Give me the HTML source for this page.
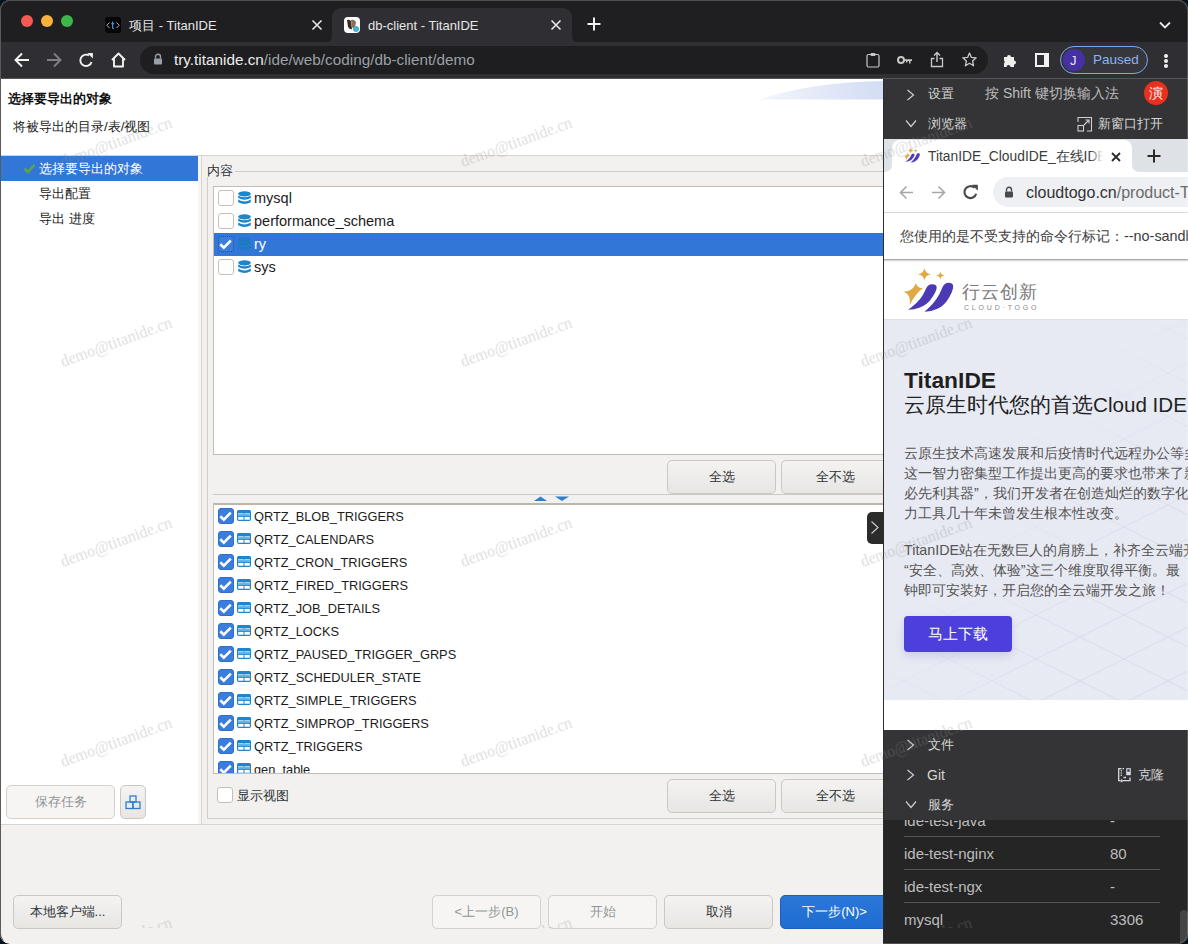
<!DOCTYPE html>
<html><head><meta charset="utf-8">
<style>
*{box-sizing:border-box;margin:0;padding:0}
html,body{width:1188px;height:944px;overflow:hidden;background:#06121c;font-family:"Liberation Sans",sans-serif}
.a{position:absolute}
.t{position:absolute;white-space:nowrap;line-height:1}
#win{position:absolute;left:0;top:0;width:1188px;height:944px;border-radius:10px;overflow:hidden;background:#f2f1f0}
/* chrome */
#tabstrip{left:0;top:0;width:1188px;height:42px;background:#1f1f21;border-top:1px solid #4e4e50}
#toolbar{left:0;top:42px;width:1188px;height:37px;background:#2f2f33;border-bottom:1px solid #555558}
.dot{position:absolute;width:12px;height:12px;border-radius:6px;top:14px}
.btn{position:absolute;border:1px solid #cdc7c2;border-radius:5px;background:linear-gradient(#f4f3f2,#e8e6e3);font-size:13px;color:#2e3436;text-align:center;line-height:32px;white-space:nowrap}
.btn.dis{background:#f6f5f4;color:#929595;border-color:#d5d0cc}
.cb{position:absolute;width:16px;height:16px;border:1px solid #c6bfb8;border-radius:3px;background:#fff}
.cbk{position:absolute;width:16px;height:16px;border-radius:3px;background:#3a7ddc;border:1px solid #2f6fcb}
.row{position:absolute;left:0;height:23px;width:700px}
.row .n{position:absolute;left:40px;top:4px;font-size:14.5px;color:#1b1b1b;white-space:nowrap;line-height:15px}
.row .n.qr{font-size:12.8px;top:4px}
.hp{font-size:14.3px;line-height:20px;color:#545454}
.j{display:inline-block;text-align:justify;text-align-last:justify;white-space:nowrap}
.wm{position:absolute;will-change:transform;font-family:"Liberation Serif",serif;font-size:16px;color:rgba(140,140,140,0.3);transform:rotate(-20deg);transform-origin:0 100%;white-space:nowrap;line-height:1;pointer-events:none}
</style></head><body>
<div id="win">
 <!-- ============ BROWSER CHROME ============ -->

 <div id="tabstrip" class="a">
  <div class="dot" style="left:21px;background:#f15b52"></div>
  <div class="dot" style="left:41px;background:#f9b23b"></div>
  <div class="dot" style="left:61px;background:#3eb548"></div>
  <!-- tab1 -->
  <div class="a" style="left:105px;top:16px;width:16px;height:16px;background:#050505;border-radius:3px"></div>
  <svg class="a" style="left:105px;top:16px" width="16" height="16"><path d="M4.5 5.5L1.8 8.3L4.5 11" stroke="#b8b8b8" stroke-width="1" fill="none"></path><path d="M11.5 5.5L14.2 8.3L11.5 11" stroke="#b8b8b8" stroke-width="1" fill="none"></path><path d="M7.6 4.5V10.5Q7.6 11.6 9 11.4M6.3 6.6H9.2" stroke="#3f95dd" stroke-width="1.2" fill="none"></path></svg>
  <div class="t" style="left:129px;top:18px;font-size:13px;color:#e6e6e6"><span class="j" style="width: 87.7px;">项目 - TitanIDE</span></div>
  <svg class="a" style="left:311px;top:18px" width="12" height="12"><path d="M1.5 1.5L10.5 10.5M10.5 1.5L1.5 10.5" stroke="#e8e8e8" stroke-width="1.6"></path></svg>
  <!-- tab2 active -->
  <div class="a" style="left:332px;top:7px;width:240px;height:36px;background:#2f2f33;border-radius:9px 9px 0 0"></div>
  <svg class="a" style="left:324px;top:34px" width="8" height="8"><path d="M0 8 Q8 8 8 0 L8 8Z" fill="#2f2f33"></path></svg>
  <svg class="a" style="left:572px;top:34px" width="8" height="8"><path d="M0 0 Q0 8 8 8 L0 8Z" fill="#2f2f33"></path></svg>
  <div class="a" style="left:344px;top:16px;width:16px;height:16px;background:#fff;border-radius:4px;overflow:hidden">
    <svg width="16" height="16"><path d="M3 3 Q5 2 7 4 L8 12 Q6 13 4 10Z" fill="#3a2a22"></path><path d="M7 3 Q10 2 12 5 L11 11 Q9 12 8 10Z" fill="#8a6e5a"></path><circle cx="12" cy="12" r="3" fill="#47b4c8"></circle></svg>
  </div>
  <div class="t" style="left:368px;top:18px;font-size:13px;color:#e6e6e6">db-client - TitanIDE</div>
  <svg class="a" style="left:550px;top:18px" width="12" height="12"><path d="M1.5 1.5L10.5 10.5M10.5 1.5L1.5 10.5" stroke="#e8e8e8" stroke-width="1.6"></path></svg>
  <svg class="a" style="left:587px;top:16px" width="14" height="14"><path d="M7 0.5V13.5M0.5 7H13.5" stroke="#f0f0f0" stroke-width="2"></path></svg>
  <svg class="a" style="left:1159px;top:20px" width="12" height="8"><path d="M1 1.5L6 6.5L11 1.5" stroke="#e8e8e8" stroke-width="1.8" fill="none"></path></svg>
 </div>
 <div id="toolbar" class="a">
  <svg class="a" style="left:14px;top:10px" width="16" height="16"><path d="M15 8H2M8 1.5L1.5 8L8 14.5" stroke="#f2f2f2" stroke-width="1.9" fill="none"></path></svg>
  <svg class="a" style="left:46px;top:10px" width="16" height="16"><path d="M1 8H14M8 1.5L14.5 8L8 14.5" stroke="#808084" stroke-width="1.9" fill="none"></path></svg>
  <svg class="a" style="left:78px;top:10px" width="16" height="16"><path d="M13.5 9.9A5.7 5.7 0 1 1 11 3.5" stroke="#f2f2f2" stroke-width="1.9" fill="none"></path><path d="M9.3 0.9L14.9 0.9L14.9 6.5Z" fill="#f2f2f2"></path></svg>
  <svg class="a" style="left:110px;top:9px" width="17" height="17"><path d="M2 9L8.5 2.5L15 9M4 7.5V15.5H13V7.5" stroke="#f2f2f2" stroke-width="1.9" fill="none" stroke-linejoin="round"></path></svg>
  <div class="a" style="left:140px;top:4px;width:848px;height:28px;border-radius:14px;background:#1e1e20"></div>
  <svg class="a" style="left:153px;top:11px" width="10" height="12"><path d="M2.5 5.5V3.8A2.5 2.5 0 0 1 7.5 3.8V5.5" stroke="#9aa0a6" stroke-width="1.4" fill="none"></path><rect x="1" y="5.5" width="8" height="6" rx="1" fill="#9aa0a6"></rect></svg>
  <div class="t" style="left:174px;top:10px;font-size:15.3px;color:#ececec">try.titanide.cn<span style="color:#9aa0a6">/ide/web/coding/db-client/demo</span></div>
  <svg class="a" style="left:866px;top:10px" width="14" height="16"><rect x="1" y="2.5" width="12" height="12.5" rx="1.5" stroke="#c8c8c8" stroke-width="1.2" fill="none"></rect><rect x="4.5" y="1" width="5" height="3" rx="1" fill="#c8c8c8"></rect></svg>
  <svg class="a" style="left:897px;top:13px" width="16" height="10"><circle cx="4" cy="5" r="3" stroke="#c8c8c8" stroke-width="2" fill="none"></circle><path d="M7 4.2H15V6H13.5V8.5H12V6H10.5V7.5H9V6H7Z" fill="#c8c8c8"></path></svg>
  <svg class="a" style="left:930px;top:9px" width="14" height="17"><path d="M7 11V2M4 4.5L7 1.5L10 4.5" stroke="#c8c8c8" stroke-width="1.4" fill="none"></path><path d="M4.5 7.5H1.5V15.5H12.5V7.5H9.5" stroke="#c8c8c8" stroke-width="1.3" fill="none"></path></svg>
  <svg class="a" style="left:962px;top:10px" width="15" height="15"><path d="M7.5 1L9.4 5.4L14.2 5.8L10.6 9L11.6 13.8L7.5 11.3L3.4 13.8L4.4 9L0.8 5.8L5.6 5.4Z" stroke="#c8c8c8" stroke-width="1.3" fill="none" stroke-linejoin="round"></path></svg>
  <svg class="a" style="left:1002px;top:10px" width="16" height="16"><path d="M2 5H5A2 2 0 0 1 9 5H12V8.5A2 2 0 0 1 12 12.5V15H8.5A2 2 0 0 0 4.5 15H2V11.5A2 2 0 0 0 2 8.5Z" fill="#eeeeee"></path></svg>
  <div class="a" style="left:1035px;top:11px;width:14px;height:14px;border:2px solid #f2f2f2;border-right-width:5px"></div>
  <div class="a" style="left:1060px;top:4px;width:88px;height:28px;border-radius:14px;border:1px solid #7ca6e6;background:#35373d"></div>
  <div class="a" style="left:1063px;top:7px;width:22px;height:22px;border-radius:11px;background:#4530a4"></div>
  <div class="t" style="left:1070px;top:12px;font-size:13px;color:#e8e4f8">J</div>
  <div class="t" style="left:1093px;top:11px;font-size:13.5px;color:#8ab4f8">Paused</div>
  <div class="a" style="left:1164px;top:12px;width:4px;height:4px;border-radius:2px;background:#f2f2f2"></div>
  <div class="a" style="left:1164px;top:17px;width:4px;height:4px;border-radius:2px;background:#f2f2f2"></div>
  <div class="a" style="left:1164px;top:22px;width:4px;height:4px;border-radius:2px;background:#f2f2f2"></div>
 </div>

 <!-- ============ DIALOG ============ -->
 <div class="a" style="left:0;top:79px;width:884px;height:76px;background:#fff"></div>
 <svg class="a" style="left:760px;top:80px" width="124" height="21"><defs><linearGradient id="arcg" x1="0" x2="1"><stop offset="0" stop-color="#f4f6fc"></stop><stop offset="1" stop-color="#d2dcf3"></stop></linearGradient></defs><path d="M0 19.5 Q50 2 124 1 L124 19.5Z" fill="url(#arcg)"></path></svg>
 <div class="t" style="left:8px;top:92px;font-size:13px;font-weight:700;color:#111"><span class="j" style="width: 104px;">选择要导出的对象</span></div>
 <div class="t" style="left:13px;top:120px;font-size:13.4px;color:#222"><span class="j" style="width: 137.5px;">将被导出的目录/表/视图</span></div>
 <div class="a" style="left:0;top:155px;width:884px;height:1px;background:#d9d4cf"></div>
 <!-- nav -->
 <div class="a" style="left:0;top:156px;width:198px;height:668px;background:#fff"></div>
 <div class="a" style="left:1px;top:156px;width:197px;height:25px;background:#3277d7"></div>
 <svg class="a" style="left:23px;top:163px" width="13" height="11"><path d="M1.5 5.5L4.8 9L11.5 1.8" stroke="#5aa34a" stroke-width="2.6" fill="none"></path></svg>
 <div class="t" style="left:39px;top:162px;font-size:13px;color:#fff"><span class="j" style="width: 104px;">选择要导出的对象</span></div>
 <div class="t" style="left:39px;top:187px;font-size:13px;color:#1b1b1b"><span class="j" style="width: 52px;">导出配置</span></div>
 <div class="t" style="left:39px;top:212px;font-size:13px;color:#1b1b1b"><span class="j" style="width: 55.6px;">导出 进度</span></div>
 <div class="a" style="left:198px;top:156px;width:3px;height:668px;background:#f6f5f4"></div>
 <div class="a" style="left:201px;top:156px;width:1px;height:668px;background:#dad5d0"></div>
 <!-- content group -->
 <div class="a" style="left:207px;top:171px;width:690px;height:648px;border:1px solid #d3cdc8"></div>
 <div class="t" style="left:207px;top:164px;font-size:13px;color:#2e3436;background:#f2f1f0;padding-right:2px"><span class="j" style="width: 26px;">内容</span></div>
 <!-- top list -->
 <div class="a" style="left:213px;top:186px;width:680px;height:269px;background:#fff;border:1px solid #c4bdb6;overflow:hidden">
  <div class="row" style="top:0"><div class="cb" style="left:4px;top:3px"></div><svg class="a" style="left:24px;top:4px" width="13" height="15"><ellipse cx="6.5" cy="2.8" rx="6.3" ry="2.6" fill="#1d86c8"></ellipse><path d="M0.2 4.5Q6.5 8.2 12.8 4.5V7Q6.5 10.6 0.2 7Z" fill="#1d86c8"></path><path d="M0.2 8.6Q6.5 12.3 12.8 8.6V11.2Q6.5 14.8 0.2 11.2Z" fill="#1d86c8"></path></svg><div class="n">mysql</div></div>
  <div class="row" style="top:23px"><div class="cb" style="left:4px;top:3px"></div><svg class="a" style="left:24px;top:4px" width="13" height="15"><ellipse cx="6.5" cy="2.8" rx="6.3" ry="2.6" fill="#1d86c8"></ellipse><path d="M0.2 4.5Q6.5 8.2 12.8 4.5V7Q6.5 10.6 0.2 7Z" fill="#1d86c8"></path><path d="M0.2 8.6Q6.5 12.3 12.8 8.6V11.2Q6.5 14.8 0.2 11.2Z" fill="#1d86c8"></path></svg><div class="n">performance_schema</div></div>
  <div class="row" style="top:46px;background:#3277d7;width:680px"><div class="cbk" style="left:4px;top:3px;border:1px dotted #1d4f95;background:#3a7fdc"></div><svg class="a" style="left:5px;top:6px" width="13" height="11"><path d="M1.3 5.2L4.8 8.6L11.8 1.6" stroke="#fff" stroke-width="2.6" fill="none"></path></svg><svg class="a" style="left:24px;top:4px" width="13" height="15"><ellipse cx="6.5" cy="2.8" rx="6.3" ry="2.6" fill="#1a7cbe"></ellipse><path d="M0.2 4.5Q6.5 8.2 12.8 4.5V7Q6.5 10.6 0.2 7Z" fill="#1a7cbe"></path><path d="M0.2 8.6Q6.5 12.3 12.8 8.6V11.2Q6.5 14.8 0.2 11.2Z" fill="#1a7cbe"></path></svg><div class="n" style="color:#fff">ry</div></div>
  <div class="row" style="top:69px"><div class="cb" style="left:4px;top:3px"></div><svg class="a" style="left:24px;top:4px" width="13" height="15"><ellipse cx="6.5" cy="2.8" rx="6.3" ry="2.6" fill="#1d86c8"></ellipse><path d="M0.2 4.5Q6.5 8.2 12.8 4.5V7Q6.5 10.6 0.2 7Z" fill="#1d86c8"></path><path d="M0.2 8.6Q6.5 12.3 12.8 8.6V11.2Q6.5 14.8 0.2 11.2Z" fill="#1d86c8"></path></svg><div class="n">sys</div></div>
 </div>
 <div class="btn" style="left:667px;top:460px;width:109px;height:34px"><span class="j" style="width: 26px;">全选</span></div>
 <div class="btn" style="left:781px;top:460px;width:109px;height:34px"><span class="j" style="width: 39px;">全不选</span></div>
 <div class="a" style="left:213px;top:494px;width:680px;height:1px;background:#cfc9c4"></div>
 <svg class="a" style="left:532px;top:496px" width="40" height="6"><path d="M2 5L8.5 0.5L15 5Z" fill="#2f7fcf"></path><path d="M23 0.5L37 0.5L30 5Z" fill="#2f7fcf"></path></svg>
 <!-- bottom list -->
 <div class="a" style="left:213px;top:503px;width:680px;height:271px;background:#fff;border:1px solid #c4bdb6;border-top:2px solid #bdb6af;overflow:hidden">
  <div class="row" style="top:0px"><div class="cbk" style="left:4px;top:3px"></div><svg class="a" style="left:5px;top:6px" width="13" height="11"><path d="M1.3 5.2L4.8 8.6L11.8 1.6" stroke="#fff" stroke-width="2.6" fill="none"></path></svg><svg class="a" style="left:23px;top:5px" width="14" height="11"><rect x="0.6" y="0.6" width="12.8" height="9.8" rx="1.2" fill="#fff" stroke="#1f86cc" stroke-width="1.2"></rect><rect x="0.6" y="0.6" width="12.8" height="2.6" fill="#1f86cc"></rect><rect x="1.2" y="3.6" width="5.2" height="2.4" fill="#62b6e8"></rect><rect x="7.6" y="3.6" width="5.2" height="2.4" fill="#62b6e8"></rect><path d="M7 3V10.5M1 6.4H13" stroke="#1f86cc" stroke-width="1"></path></svg><div class="n qr">QRTZ_BLOB_TRIGGERS</div></div>
  <div class="row" style="top:23px"><div class="cbk" style="left:4px;top:3px"></div><svg class="a" style="left:5px;top:6px" width="13" height="11"><path d="M1.3 5.2L4.8 8.6L11.8 1.6" stroke="#fff" stroke-width="2.6" fill="none"></path></svg><svg class="a" style="left:23px;top:5px" width="14" height="11"><rect x="0.6" y="0.6" width="12.8" height="9.8" rx="1.2" fill="#fff" stroke="#1f86cc" stroke-width="1.2"></rect><rect x="0.6" y="0.6" width="12.8" height="2.6" fill="#1f86cc"></rect><rect x="1.2" y="3.6" width="5.2" height="2.4" fill="#62b6e8"></rect><rect x="7.6" y="3.6" width="5.2" height="2.4" fill="#62b6e8"></rect><path d="M7 3V10.5M1 6.4H13" stroke="#1f86cc" stroke-width="1"></path></svg><div class="n qr">QRTZ_CALENDARS</div></div>
  <div class="row" style="top:46px"><div class="cbk" style="left:4px;top:3px"></div><svg class="a" style="left:5px;top:6px" width="13" height="11"><path d="M1.3 5.2L4.8 8.6L11.8 1.6" stroke="#fff" stroke-width="2.6" fill="none"></path></svg><svg class="a" style="left:23px;top:5px" width="14" height="11"><rect x="0.6" y="0.6" width="12.8" height="9.8" rx="1.2" fill="#fff" stroke="#1f86cc" stroke-width="1.2"></rect><rect x="0.6" y="0.6" width="12.8" height="2.6" fill="#1f86cc"></rect><rect x="1.2" y="3.6" width="5.2" height="2.4" fill="#62b6e8"></rect><rect x="7.6" y="3.6" width="5.2" height="2.4" fill="#62b6e8"></rect><path d="M7 3V10.5M1 6.4H13" stroke="#1f86cc" stroke-width="1"></path></svg><div class="n qr">QRTZ_CRON_TRIGGERS</div></div>
  <div class="row" style="top:69px"><div class="cbk" style="left:4px;top:3px"></div><svg class="a" style="left:5px;top:6px" width="13" height="11"><path d="M1.3 5.2L4.8 8.6L11.8 1.6" stroke="#fff" stroke-width="2.6" fill="none"></path></svg><svg class="a" style="left:23px;top:5px" width="14" height="11"><rect x="0.6" y="0.6" width="12.8" height="9.8" rx="1.2" fill="#fff" stroke="#1f86cc" stroke-width="1.2"></rect><rect x="0.6" y="0.6" width="12.8" height="2.6" fill="#1f86cc"></rect><rect x="1.2" y="3.6" width="5.2" height="2.4" fill="#62b6e8"></rect><rect x="7.6" y="3.6" width="5.2" height="2.4" fill="#62b6e8"></rect><path d="M7 3V10.5M1 6.4H13" stroke="#1f86cc" stroke-width="1"></path></svg><div class="n qr">QRTZ_FIRED_TRIGGERS</div></div>
  <div class="row" style="top:92px"><div class="cbk" style="left:4px;top:3px"></div><svg class="a" style="left:5px;top:6px" width="13" height="11"><path d="M1.3 5.2L4.8 8.6L11.8 1.6" stroke="#fff" stroke-width="2.6" fill="none"></path></svg><svg class="a" style="left:23px;top:5px" width="14" height="11"><rect x="0.6" y="0.6" width="12.8" height="9.8" rx="1.2" fill="#fff" stroke="#1f86cc" stroke-width="1.2"></rect><rect x="0.6" y="0.6" width="12.8" height="2.6" fill="#1f86cc"></rect><rect x="1.2" y="3.6" width="5.2" height="2.4" fill="#62b6e8"></rect><rect x="7.6" y="3.6" width="5.2" height="2.4" fill="#62b6e8"></rect><path d="M7 3V10.5M1 6.4H13" stroke="#1f86cc" stroke-width="1"></path></svg><div class="n qr">QRTZ_JOB_DETAILS</div></div>
  <div class="row" style="top:115px"><div class="cbk" style="left:4px;top:3px"></div><svg class="a" style="left:5px;top:6px" width="13" height="11"><path d="M1.3 5.2L4.8 8.6L11.8 1.6" stroke="#fff" stroke-width="2.6" fill="none"></path></svg><svg class="a" style="left:23px;top:5px" width="14" height="11"><rect x="0.6" y="0.6" width="12.8" height="9.8" rx="1.2" fill="#fff" stroke="#1f86cc" stroke-width="1.2"></rect><rect x="0.6" y="0.6" width="12.8" height="2.6" fill="#1f86cc"></rect><rect x="1.2" y="3.6" width="5.2" height="2.4" fill="#62b6e8"></rect><rect x="7.6" y="3.6" width="5.2" height="2.4" fill="#62b6e8"></rect><path d="M7 3V10.5M1 6.4H13" stroke="#1f86cc" stroke-width="1"></path></svg><div class="n qr">QRTZ_LOCKS</div></div>
  <div class="row" style="top:138px"><div class="cbk" style="left:4px;top:3px"></div><svg class="a" style="left:5px;top:6px" width="13" height="11"><path d="M1.3 5.2L4.8 8.6L11.8 1.6" stroke="#fff" stroke-width="2.6" fill="none"></path></svg><svg class="a" style="left:23px;top:5px" width="14" height="11"><rect x="0.6" y="0.6" width="12.8" height="9.8" rx="1.2" fill="#fff" stroke="#1f86cc" stroke-width="1.2"></rect><rect x="0.6" y="0.6" width="12.8" height="2.6" fill="#1f86cc"></rect><rect x="1.2" y="3.6" width="5.2" height="2.4" fill="#62b6e8"></rect><rect x="7.6" y="3.6" width="5.2" height="2.4" fill="#62b6e8"></rect><path d="M7 3V10.5M1 6.4H13" stroke="#1f86cc" stroke-width="1"></path></svg><div class="n qr">QRTZ_PAUSED_TRIGGER_GRPS</div></div>
  <div class="row" style="top:161px"><div class="cbk" style="left:4px;top:3px"></div><svg class="a" style="left:5px;top:6px" width="13" height="11"><path d="M1.3 5.2L4.8 8.6L11.8 1.6" stroke="#fff" stroke-width="2.6" fill="none"></path></svg><svg class="a" style="left:23px;top:5px" width="14" height="11"><rect x="0.6" y="0.6" width="12.8" height="9.8" rx="1.2" fill="#fff" stroke="#1f86cc" stroke-width="1.2"></rect><rect x="0.6" y="0.6" width="12.8" height="2.6" fill="#1f86cc"></rect><rect x="1.2" y="3.6" width="5.2" height="2.4" fill="#62b6e8"></rect><rect x="7.6" y="3.6" width="5.2" height="2.4" fill="#62b6e8"></rect><path d="M7 3V10.5M1 6.4H13" stroke="#1f86cc" stroke-width="1"></path></svg><div class="n qr">QRTZ_SCHEDULER_STATE</div></div>
  <div class="row" style="top:184px"><div class="cbk" style="left:4px;top:3px"></div><svg class="a" style="left:5px;top:6px" width="13" height="11"><path d="M1.3 5.2L4.8 8.6L11.8 1.6" stroke="#fff" stroke-width="2.6" fill="none"></path></svg><svg class="a" style="left:23px;top:5px" width="14" height="11"><rect x="0.6" y="0.6" width="12.8" height="9.8" rx="1.2" fill="#fff" stroke="#1f86cc" stroke-width="1.2"></rect><rect x="0.6" y="0.6" width="12.8" height="2.6" fill="#1f86cc"></rect><rect x="1.2" y="3.6" width="5.2" height="2.4" fill="#62b6e8"></rect><rect x="7.6" y="3.6" width="5.2" height="2.4" fill="#62b6e8"></rect><path d="M7 3V10.5M1 6.4H13" stroke="#1f86cc" stroke-width="1"></path></svg><div class="n qr">QRTZ_SIMPLE_TRIGGERS</div></div>
  <div class="row" style="top:207px"><div class="cbk" style="left:4px;top:3px"></div><svg class="a" style="left:5px;top:6px" width="13" height="11"><path d="M1.3 5.2L4.8 8.6L11.8 1.6" stroke="#fff" stroke-width="2.6" fill="none"></path></svg><svg class="a" style="left:23px;top:5px" width="14" height="11"><rect x="0.6" y="0.6" width="12.8" height="9.8" rx="1.2" fill="#fff" stroke="#1f86cc" stroke-width="1.2"></rect><rect x="0.6" y="0.6" width="12.8" height="2.6" fill="#1f86cc"></rect><rect x="1.2" y="3.6" width="5.2" height="2.4" fill="#62b6e8"></rect><rect x="7.6" y="3.6" width="5.2" height="2.4" fill="#62b6e8"></rect><path d="M7 3V10.5M1 6.4H13" stroke="#1f86cc" stroke-width="1"></path></svg><div class="n qr">QRTZ_SIMPROP_TRIGGERS</div></div>
  <div class="row" style="top:230px"><div class="cbk" style="left:4px;top:3px"></div><svg class="a" style="left:5px;top:6px" width="13" height="11"><path d="M1.3 5.2L4.8 8.6L11.8 1.6" stroke="#fff" stroke-width="2.6" fill="none"></path></svg><svg class="a" style="left:23px;top:5px" width="14" height="11"><rect x="0.6" y="0.6" width="12.8" height="9.8" rx="1.2" fill="#fff" stroke="#1f86cc" stroke-width="1.2"></rect><rect x="0.6" y="0.6" width="12.8" height="2.6" fill="#1f86cc"></rect><rect x="1.2" y="3.6" width="5.2" height="2.4" fill="#62b6e8"></rect><rect x="7.6" y="3.6" width="5.2" height="2.4" fill="#62b6e8"></rect><path d="M7 3V10.5M1 6.4H13" stroke="#1f86cc" stroke-width="1"></path></svg><div class="n qr">QRTZ_TRIGGERS</div></div>
  <div class="row" style="top:253px"><div class="cbk" style="left:4px;top:3px"></div><svg class="a" style="left:5px;top:6px" width="13" height="11"><path d="M1.3 5.2L4.8 8.6L11.8 1.6" stroke="#fff" stroke-width="2.6" fill="none"></path></svg><svg class="a" style="left:23px;top:5px" width="14" height="11"><rect x="0.6" y="0.6" width="12.8" height="9.8" rx="1.2" fill="#fff" stroke="#1f86cc" stroke-width="1.2"></rect><rect x="0.6" y="0.6" width="12.8" height="2.6" fill="#1f86cc"></rect><rect x="1.2" y="3.6" width="5.2" height="2.4" fill="#62b6e8"></rect><rect x="7.6" y="3.6" width="5.2" height="2.4" fill="#62b6e8"></rect><path d="M7 3V10.5M1 6.4H13" stroke="#1f86cc" stroke-width="1"></path></svg><div class="n qr">gen_table</div></div>
  
 </div>
 <div class="cb" style="left:217px;top:787px"></div>
 <div class="t" style="left:237px;top:789px;font-size:13px;color:#2e3436"><span class="j" style="width: 52px;">显示视图</span></div>
 <div class="btn" style="left:667px;top:779px;width:109px;height:34px"><span class="j" style="width: 26px;">全选</span></div>
 <div class="btn" style="left:781px;top:779px;width:109px;height:34px"><span class="j" style="width: 39px;">全不选</span></div>
 <div class="btn dis" style="left:6px;top:785px;width:109px;height:34px"><span class="j" style="width: 52px;">保存任务</span></div>
 <div class="btn" style="left:120px;top:785px;width:26px;height:34px"></div>
 <svg class="a" style="left:125px;top:795px" width="16" height="15"><rect x="5" y="1" width="6" height="6" stroke="#2a7fd4" stroke-width="1.3" fill="none"></rect><rect x="1" y="7" width="7" height="6.5" stroke="#2a7fd4" stroke-width="1.3" fill="none"></rect><rect x="8" y="7" width="7" height="6.5" stroke="#2a7fd4" stroke-width="1.3" fill="none"></rect></svg>
 <div class="a" style="left:0;top:824px;width:884px;height:1px;background:#d9d4cf"></div>
 <div class="btn" style="left:13px;top:895px;width:109px;height:34px"><span class="j" style="width: 75.8px;">本地客户端...</span></div>
 <div class="btn dis" style="left:432px;top:895px;width:109px;height:34px"><span class="j" style="width: 63.9px;">&lt;上一步(B)</span></div>
 <div class="btn dis" style="left:548px;top:895px;width:109px;height:34px"><span class="j" style="width: 26px;">开始</span></div>
 <div class="btn" style="left:664px;top:895px;width:109px;height:34px"><span class="j" style="width: 26px;">取消</span></div>
 <div class="btn" style="left:780px;top:895px;width:109px;height:34px;background:linear-gradient(#2b78d8,#1f6cd2);border-color:#1b5fb8;color:#fff"><span class="j" style="width: 64.6px;">下一步(N)&gt;</span></div>
 <div class="a" style="left:867px;top:512px;width:17px;height:32px;background:#2b2b2b;border-radius:5px 0 0 5px"></div>
 <svg class="a" style="left:870px;top:520px" width="10" height="15"><path d="M1.5 1.5L8 7.5L1.5 13.5" stroke="#cfcfcf" stroke-width="1.1" fill="none"></path></svg>
 <div class="a" style="left:0;top:79px;width:1px;height:863px;background:#3a3a3a"></div>

 <!-- ============ RIGHT PANEL ============ -->
 <div class="a" style="left:883px;top:79px;width:305px;height:865px;background:#252526"></div>
 <div class="a" style="left:884px;top:79px;width:304px;height:60px;background:#343436"></div>
 <svg class="a" style="left:906px;top:89px" width="10" height="12"><path d="M1.5 1L7.5 6L1.5 11" stroke="#cfcfcf" stroke-width="1.2" fill="none"></path></svg>
 <div class="t" style="left:928px;top:87px;font-size:13px;color:#d4d4d4"><span class="j" style="width: 26px;">设置</span></div>
 <div class="t" style="left:985px;top:86px;font-size:14px;color:#bdbdbd"><span class="j" style="width: 133.8px;">按 Shift 键切换输入法</span></div>
 <div class="a" style="left:1144px;top:81px;width:24px;height:24px;border-radius:12px;background:#e8301c"></div>
 <div class="t" style="left:1149px;top:86px;font-size:14px;color:#fff"><span class="j" style="width: 14px;">演</span></div>
 <svg class="a" style="left:905px;top:119px" width="12" height="10"><path d="M1 1.5L6 7.5L11 1.5" stroke="#cfcfcf" stroke-width="1.2" fill="none"></path></svg>
 <div class="t" style="left:928px;top:117px;font-size:13px;color:#d4d4d4"><span class="j" style="width: 39px;">浏览器</span></div>
 <svg class="a" style="left:1077px;top:116px" width="16" height="16"><path d="M1 6V1.5H14.5V15H10" stroke="#cfcfcf" stroke-width="1.1" fill="none"></path><rect x="1" y="9.5" width="5.5" height="5.5" stroke="#cfcfcf" stroke-width="1.1" fill="none"></rect><path d="M7 9L12 4M8.5 4H12V7.5" stroke="#cfcfcf" stroke-width="1.1" fill="none"></path></svg>
 <div class="t" style="left:1098px;top:117px;font-size:13px;color:#d4d4d4"><span class="j" style="width: 65px;">新窗口打开</span></div>
 <!-- embedded browser -->
 <div class="a" style="left:884px;top:139px;width:304px;height:591px;background:#fff;overflow:hidden">
  <div class="a" style="left:0;top:0;width:304px;height:33px;background:#dee1e6"></div>
  <div class="a" style="left:8px;top:1px;width:240px;height:33px;background:#fff;border-radius:8px 8px 0 0"></div>
  <svg class="a" style="left:0px;top:25px" width="8" height="8"><path d="M0 8 Q8 8 8 0 L8 8Z" fill="#fff"></path></svg>
  <svg class="a" style="left:248px;top:25px" width="8" height="8"><path d="M0 0 Q0 8 8 8 L0 8Z" fill="#fff"></path></svg>
  <svg class="a" style="left:20px;top:9px" width="18" height="16"><g transform="translate(-1.8,-1.5) scale(0.32)"><path d="M26.4 3Q27 11 35 12.2Q27 13.4 26.4 21Q25.8 13.4 18 12.2Q25.8 11 26.4 3Z" fill="#e1a943"></path><path d="M42.4 7Q42.8 13 49 13.4Q42.8 13.8 42.4 20Q42 13.8 36 13.4Q42 13 42.4 7Z" fill="#e1a943"></path><path d="M17.8 21Q19 26.5 25.2 26.1Q18 31 11.6 43.3Q13.5 33 5.9 29.7Q15.5 29 17.8 21Z" fill="#e1a943"></path><path d="M7 48.5C18 49.5 28 45 33 38.5C37 33 39.5 29 39.5 25.5C39.5 22.5 37 21.5 34 21.5C30.5 21.5 28.5 23.5 27 27C24.5 33 19.5 40 13 44.5C11 46 9 47.5 7 48.5Z" fill="#4a3bb5" stroke="#fff" stroke-width="2"></path><path d="M24 50.5C35 51.5 45 46 49.5 39.5C53.5 33.5 56 29 56 24.5C56 21.5 53.5 20 50.5 20C47 20 45 22 43.5 25.5C41 32 36 40 30 45.5C28 47.5 26 49.5 24 50.5Z" fill="#4a3bb5" stroke="#fff" stroke-width="2"></path></g></svg>
  <div class="a" style="left:44px;top:9px;font-size:13.8px;line-height:17px;white-space:nowrap;color:#3c3c3c;width:178px;overflow:hidden"><span class="j" style="width: 228.2px;">TitanIDE_CloudIDE_在线IDE_云原生</span></div><div class="a" style="left:206px;top:8px;width:16px;height:20px;background:linear-gradient(to right,rgba(255,255,255,0),#fff 80%)"></div>
  <svg class="a" style="left:227px;top:13px" width="10" height="10"><path d="M1 1L9 9M9 1L1 9" stroke="#2a2a2a" stroke-width="1.8"></path></svg>
  <svg class="a" style="left:263px;top:10px" width="14" height="14"><path d="M7 0.5V13.5M0.5 7H13.5" stroke="#2a2a2a" stroke-width="2"></path></svg>
  <!-- toolbar -->
  <svg class="a" style="left:15px;top:46px" width="15" height="15"><path d="M14 7.5H2M7.5 1.5L1.5 7.5L7.5 13.5" stroke="#a5a7aa" stroke-width="1.6" fill="none"></path></svg>
  <svg class="a" style="left:47px;top:46px" width="15" height="15"><path d="M1 7.5H13M7.5 1.5L13.5 7.5L7.5 13.5" stroke="#a5a7aa" stroke-width="1.6" fill="none"></path></svg>
  <svg class="a" style="left:78px;top:45px" width="17" height="17"><path d="M14.2 9.8A6 6 0 1 1 12.4 3.6" stroke="#48484b" stroke-width="2.1" fill="none"></path><path d="M9.8 0.8L15.8 0.8L15.8 6.8Z" fill="#48484b"></path></svg>
  <div class="a" style="left:109px;top:38px;width:220px;height:30px;border-radius:15px;background:#eef0f3"></div>
  <svg class="a" style="left:120px;top:47px" width="10" height="12"><path d="M2.5 5.5V3.8A2.5 2.5 0 0 1 7.5 3.8V5.5" stroke="#4a4a4d" stroke-width="1.4" fill="none"></path><rect x="1" y="5.5" width="8" height="6" rx="1" fill="#4a4a4d"></rect></svg>
  <div class="t" style="left:142px;top:46px;font-size:16px;color:#333">cloudtogo.cn<span style="color:#6a6a6a">/product-TitanIDE</span></div>
  <div class="a" style="left:0;top:73px;width:304px;height:1px;background:#d6d8dc"></div>
  <div class="t" style="left:16px;top:90px;font-size:14.4px;color:#3c3c3c"><span class="j" style="width: 308.8px;">您使用的是不受支持的命令行标记：--no-sandbox</span></div>
  <div class="a" style="left:0;top:120px;width:304px;height:1px;background:#a9a9a9"></div>
  <div class="a" style="left:0;top:121px;width:304px;height:2px;background:linear-gradient(#cfcfcf,#fff)"></div>
  <!-- page -->
  <svg class="a" style="left:14px;top:123px" width="60" height="56"><path d="M26.4 5.7Q27 11.6 32.9 12.2Q27 12.8 26.4 18.7Q25.8 12.8 19.9 12.2Q25.8 11.6 26.4 5.7Z" fill="#e1a943"></path><path d="M42.4 9.2Q42.8 13 46.6 13.4Q42.8 13.8 42.4 17.6Q42 13.8 38.2 13.4Q42 13 42.4 9.2Z" fill="#e1a943"></path><path d="M17.8 21Q19 26.5 25.2 26.1Q18 31 11.6 43.3Q13.5 33 5.9 29.7Q15.5 29 17.8 21Z" fill="#e1a943"></path><path d="M7 48.5C18 49.5 28 45 33 38.5C37 33 39.5 29 39.5 25.5C39.5 22.5 37 21.5 34 21.5C30.5 21.5 28.5 23.5 27 27C24.5 33 19.5 40 13 44.5C11 46 9 47.5 7 48.5Z" fill="#4a3bb5" stroke="#fff" stroke-width="1.6"></path><path d="M24 50.5C35 51.5 45 46 49.5 39.5C53.5 33.5 56 29 56 24.5C56 21.5 53.5 20 50.5 20C47 20 45 22 43.5 25.5C41 32 36 40 30 45.5C28 47.5 26 49.5 24 50.5Z" fill="#4a3bb5" stroke="#fff" stroke-width="1.6"></path></svg>
  <div class="t" style="left:78px;top:144px;font-size:18px;color:#7b7b7b;letter-spacing:1px"><span class="j" style="width: 76px;">行云创新</span></div>
  <div class="t" style="left:80px;top:165px;font-size:7px;color:#8a8a8a;letter-spacing:2.8px">CLOUD·TOGO</div>
  <div class="a" style="left:0;top:180px;width:304px;height:381px;background:#e8eaf3;overflow:hidden;box-shadow:inset 0 1px 0 #dfe0e5">
   <svg class="a" style="left:0;top:0" width="304" height="381"><defs><linearGradient id="gm" x1="0" y1="0" x2="1" y2="1"><stop offset="0.35" stop-color="#fff" stop-opacity="0"></stop><stop offset="0.75" stop-color="#fff" stop-opacity="1"></stop></linearGradient><mask id="gmask"><rect width="304" height="381" fill="url(#gm)"></rect></mask></defs><g mask="url(#gmask)" stroke="#d6dbe6" stroke-width="0.8" fill="none"><path d="M0 -528 L304 -376 M0 -376 L304 -528 M0 -484 L304 -332 M0 -332 L304 -484 M0 -440 L304 -288 M0 -288 L304 -440 M0 -396 L304 -244 M0 -244 L304 -396 M0 -352 L304 -200 M0 -200 L304 -352 M0 -308 L304 -156 M0 -156 L304 -308 M0 -264 L304 -112 M0 -112 L304 -264 M0 -220 L304 -68 M0 -68 L304 -220 M0 -176 L304 -24 M0 -24 L304 -176 M0 -132 L304 20 M0 20 L304 -132 M0 -88 L304 64 M0 64 L304 -88 M0 -44 L304 108 M0 108 L304 -44 M0 0 L304 152 M0 152 L304 0 M0 44 L304 196 M0 196 L304 44 M0 88 L304 240 M0 240 L304 88 M0 132 L304 284 M0 284 L304 132 M0 176 L304 328 M0 328 L304 176 M0 220 L304 372 M0 372 L304 220 M0 264 L304 416 M0 416 L304 264 M0 308 L304 460 M0 460 L304 308 M0 352 L304 504 M0 504 L304 352 M0 396 L304 548 M0 548 L304 396 M0 440 L304 592 M0 592 L304 440 M0 484 L304 636 M0 636 L304 484 M0 528 L304 680 M0 680 L304 528 M0 572 L304 724 M0 724 L304 572"></path></g></svg>
   <div class="t" style="left:20px;top:50px;font-size:22.8px;font-weight:700;color:#1f1f1f">TitanIDE</div>
   <div class="t" style="left:20px;top:76px;font-size:20.6px;color:#222"><span class="j" style="width: 282.9px;">云原生时代您的首选Cloud IDE</span></div>
      <div class="t hp" style="left:20px;top:124px"><span class="j" style="width: 294px;">云原生技术高速发展和后疫情时代远程办公等多</span></div>
   <div class="t hp" style="left:20px;top:144px"><span class="j" style="width: 294px;">这一智力密集型工作提出更高的要求也带来了新</span></div>
   <div class="t hp" style="left:20px;top:164px"><span class="j" style="width: 284.8px;">必先利其器”，我们开发者在创造灿烂的数字化</span></div>
   <div class="t hp" style="left:20px;top:184px"><span class="j" style="width: 224px;">力工具几十年未曾发生根本性改变。</span></div>
      <div class="t hp" style="left:20px;top:221px"><span class="j" style="width: 293.1px;">TitanIDE站在无数巨人的肩膀上，补齐全云端开</span></div>
   <div class="t hp" style="left:20px;top:241px"><span class="j" style="width: 275.5px;">“安全、高效、体验”这三个维度取得平衡。最</span></div>
   <div class="t hp" style="left:20px;top:261px"><span class="j" style="width: 266px;">钟即可安装好，开启您的全云端开发之旅！</span></div>
   <div class="a" style="left:20px;top:297px;width:108px;height:36px;border-radius:4px;background:#4d3fdb;box-shadow:0 4px 10px rgba(80,70,200,0.18)"></div>
   <div class="t" style="left:44px;top:307px;font-size:15px;color:#fff"><span class="j" style="width: 60px;">马上下载</span></div>
  </div>
 </div>
 <!-- lower panel -->
 <div class="a" style="left:884px;top:730px;width:304px;height:90px;background:#343436"></div>
 <svg class="a" style="left:906px;top:739px" width="10" height="12"><path d="M1.5 1L7.5 6L1.5 11" stroke="#cfcfcf" stroke-width="1.2" fill="none"></path></svg>
 <div class="t" style="left:928px;top:738px;font-size:13px;color:#d4d4d4"><span class="j" style="width: 26px;">文件</span></div>
 <svg class="a" style="left:906px;top:769px" width="10" height="12"><path d="M1.5 1L7.5 6L1.5 11" stroke="#cfcfcf" stroke-width="1.2" fill="none"></path></svg>
 <div class="t" style="left:927px;top:768px;font-size:14px;color:#d4d4d4">Git</div>
 <svg class="a" style="left:1118px;top:768px" width="14" height="15"><path d="M3.5 0.7H0.7V12.7H2.5M6 0.7H4.5M4.5 12.7H12V9.5M8 9.5H5.5" stroke="#d6dbe3" stroke-width="1.3" fill="none"></path><rect x="8.2" y="0.2" width="4.6" height="7" fill="#d6dbe3"></rect><rect x="9.3" y="1.3" width="2.4" height="2.4" fill="#3a3a3c"></rect><circle cx="3.3" cy="2.8" r="0.8" fill="#d6dbe3"></circle><circle cx="3.3" cy="5" r="0.8" fill="#d6dbe3"></circle><circle cx="3.3" cy="7.2" r="0.8" fill="#d6dbe3"></circle><path d="M2.7 11.5V14.5L3.6 13.8L4.5 14.5V11.5Z" fill="#d6dbe3"></path></svg>
 <div class="t" style="left:1138px;top:768px;font-size:13px;color:#d4d4d4"><span class="j" style="width: 26px;">克隆</span></div>
 <svg class="a" style="left:905px;top:800px" width="12" height="10"><path d="M1 1.5L6 7.5L11 1.5" stroke="#cfcfcf" stroke-width="1.2" fill="none"></path></svg>
 <div class="t" style="left:928px;top:798px;font-size:13px;color:#d4d4d4"><span class="j" style="width: 26px;">服务</span></div>
 <!-- services -->
 <div class="a" style="left:884px;top:820px;width:304px;height:124px;background:#252526;overflow:hidden">
  <div class="t" style="left:20px;top:-7px;font-size:15px;color:#bdbdbd">ide-test-java</div>
  <div class="t" style="left:226px;top:-7px;font-size:15px;color:#bdbdbd">-</div>
  <div class="a" style="left:20px;top:16px;width:256px;height:1px;background:#555"></div>
  <div class="t" style="left:20px;top:26px;font-size:15px;color:#bdbdbd">ide-test-nginx</div>
  <div class="t" style="left:226px;top:26px;font-size:15px;color:#bdbdbd">80</div>
  <div class="a" style="left:20px;top:49px;width:256px;height:1px;background:#555"></div>
  <div class="t" style="left:20px;top:59px;font-size:15px;color:#bdbdbd">ide-test-ngx</div>
  <div class="t" style="left:226px;top:59px;font-size:15px;color:#bdbdbd">-</div>
  <div class="a" style="left:20px;top:82px;width:256px;height:1px;background:#555"></div>
  <div class="t" style="left:20px;top:92px;font-size:15px;color:#bdbdbd">mysql</div>
  <div class="t" style="left:226px;top:92px;font-size:15px;color:#bdbdbd">3306</div>
  <div class="a" style="left:296px;top:90px;width:8px;height:40px;border-radius:4px;background:#454545"></div>
 </div>
 <div class="a" style="left:883px;top:79px;width:1px;height:863px;background:#2c2c2c"></div>

 <!-- watermarks -->
 <div class="a" style="left:0;top:79px;width:1188px;height:849px;overflow:hidden;pointer-events:none">
 <div class="wm" style="left:64px;top:75px">demo@titanide.cn</div>
 <div class="wm" style="left:464px;top:75px">demo@titanide.cn</div>
 <div class="wm" style="left:864px;top:75px">demo@titanide.cn</div>
 <div class="wm" style="left:64px;top:275px">demo@titanide.cn</div>
 <div class="wm" style="left:464px;top:275px">demo@titanide.cn</div>
 <div class="wm" style="left:864px;top:275px">demo@titanide.cn</div>
 <div class="wm" style="left:64px;top:475px">demo@titanide.cn</div>
 <div class="wm" style="left:464px;top:475px">demo@titanide.cn</div>
 <div class="wm" style="left:864px;top:475px">demo@titanide.cn</div>
 <div class="wm" style="left:64px;top:675px">demo@titanide.cn</div>
 <div class="wm" style="left:464px;top:675px">demo@titanide.cn</div>
 <div class="wm" style="left:864px;top:675px">demo@titanide.cn</div>
 <div class="wm" style="left:64px;top:875px">demo@titanide.cn</div>
 <div class="wm" style="left:464px;top:875px">demo@titanide.cn</div>
 <div class="wm" style="left:864px;top:875px">demo@titanide.cn</div>
 </div>
 <div class="a" style="left:0;top:0;width:1188px;height:944px;border:1px solid rgba(255,255,255,0.2);border-top-color:#4e4e50;border-left-color:#5a5a5c;border-radius:10px;pointer-events:none"></div>
</div>

</body></html>
